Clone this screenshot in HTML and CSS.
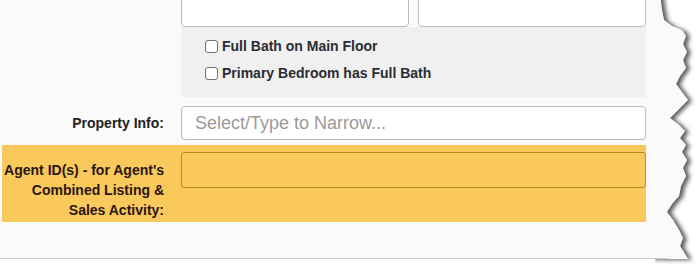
FILE: index.html
```html
<!DOCTYPE html>
<html>
<head>
    <title>Search Criteria</title>
    <link rel="stylesheet" href="styles.css">
</head>
<body>

<div class="frame">
    <div class="sheet">
        <!-- bedrooms / baths inputs (cut off at top) -->
        <div class="row top-row">
            <div></div>
            <div class="pair">
                <input type="text" class="field">
                <input type="text" class="field">
            </div>
        </div>

        <div class="row">
            <div></div>
            <div class="checks">
                <label class="check"><input type="checkbox"> Full Bath on Main Floor</label>
                <label class="check"><input type="checkbox"> Primary Bedroom has Full Bath</label>
            </div>
        </div>

        <div class="row prop-row">
            <label class="row-label" for="propInfo">Property Info:</label>
            <input type="text" id="propInfo" class="field big" placeholder="Select/Type to Narrow...">
        </div>

        <div class="row agent-row">
            <label class="row-label" for="agentIds">Agent ID(s) - for Agent's Combined Listing &amp; Sales Activity:</label>
            <div><input type="text" id="agentIds" class="field agent"></div>
        </div>
    </div>

    <!-- torn edge on the right -->
    <svg class="tear" width="43" height="268" viewBox="0 0 43 268">
        <defs>
            <filter id="tearShadow" x="-50%" y="-10%" width="200%" height="120%">
                <feDropShadow dx="4" dy="1" stdDeviation="2" flood-color="#555555" flood-opacity="0.95"/>
            </filter>
        </defs>
        <polygon filter="url(#tearShadow)" fill="#fafafa"
            points="5,-5 7,10 9,20 17,26 27,30 31,36 28,44 32,52 28,60 31,68 25,76 21,84 27,92 33,100 27,106 20,113 15,118 23,124 30,131 25,138 31,145 27,152 32,160 28,168 31,176 26,186 24,196 17,204 12,212 18,220 24,230 28,238 25,246 30,254 33,259 -5,259 -5,-5"/>
        <line x1="-5" y1="258.5" x2="13" y2="258.5" stroke="#cccccc" stroke-width="1"/>
    </svg>
</div>

</body>
</html>
```

FILE: styles.css
```css
body {
    margin: 0;
    background: #ffffff;
    font-family: "Liberation Sans", Arial, sans-serif;
}
.frame {
    position: relative;
    width: 698px;
    height: 268px;
    overflow: hidden;
}
.sheet {
    width: 653px;
    height: 258px;
    padding-left: 2px;
    background: #fafafa;
    border-bottom: 1px solid #cccccc;
    overflow: hidden;
}
.tear {
    position: absolute;
    top: 0;
    left: 655px;
}
.row {
    display: grid;
    grid-template-columns: 162px 465px;
    column-gap: 17px;
    width: 644px;
    padding-right: 2px;
}
.row-label {
    text-align: right;
    font-size: 14px;
    font-weight: bold;
    line-height: 20px;
    color: #222222;
}
.field {
    box-sizing: border-box;
    width: 100%;
    margin: 0;
    border: 1px solid #bbbbbb;
    border-radius: 4px;
    background: #ffffff;
    font-family: "Liberation Sans", Arial, sans-serif;
}
.top-row {
    margin-top: -7px;
}
.pair {
    display: flex;
    gap: 9px;
}
.pair .field {
    height: 34px;
}
.checks {
    display: flex;
    flex-direction: column;
    gap: 7px;
    height: 70px;
    box-sizing: border-box;
    padding: 9px 0 0 24px;
    background: #f0f0f0;
}
.check {
    display: flex;
    align-items: center;
    font-size: 14px;
    font-weight: bold;
    line-height: 20px;
    color: #2b2b33;
}
.check input {
    appearance: none;
    box-sizing: border-box;
    width: 13px;
    height: 13px;
    margin: 0 4px 0 0;
    border: 1px solid #707070;
    border-radius: 3px;
    background: #ffffff;
}
.prop-row {
    margin-top: 9px;
    align-items: center;
}
.big {
    height: 34px;
    padding: 0 13px;
    font-size: 18px;
    color: #333333;
}
.big::placeholder {
    color: #9a9a9a;
}
.agent-row {
    margin-top: 5px;
    height: 77px;
    box-sizing: border-box;
    background: #f9c95c;
}
.agent-row .row-label {
    padding-top: 15px;
    color: #2a1610;
}
.agent {
    height: 36px;
    margin-top: 7px;
    border-color: #b8892a;
    border-radius: 3px;
    background: #f9c95c;
}
```
